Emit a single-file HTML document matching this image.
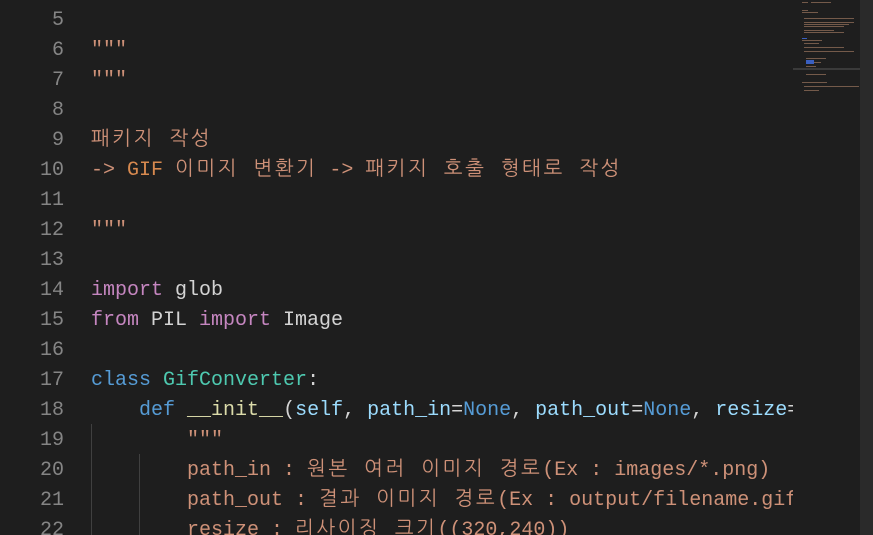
<!DOCTYPE html>
<html><head><meta charset="utf-8"><style>
html,body{margin:0;padding:0;width:873px;height:535px;overflow:hidden;background:#1e1e1e}
.ed{position:absolute;left:0;top:0;width:793px;height:535px;overflow:hidden}
.ln{position:absolute;left:0;width:64px;text-align:right;color:#858585;font:20px "Liberation Mono",monospace;line-height:30px}
.cd{position:absolute;left:91px;white-space:pre;color:#d4d4d4;font:20px "Liberation Mono","NanumGothic","Noto Sans CJK KR",monospace;line-height:30px}
.k{color:#c586c0}.b{color:#569cd6}.t{color:#4ec9b0}.y{color:#dcdcaa}.v{color:#9cdcfe}.s{color:#ce9178}
.h{letter-spacing:2.5px}
.g{position:absolute;width:1px;background:#404040}
.mm{position:absolute;left:793px;top:0;width:80px;height:535px;background:#1e1e1e}
</style></head><body>
<div class="ed">
<div class="g" style="left:91px;top:424px;height:111px"></div>
<div class="g" style="left:139px;top:454px;height:81px"></div>
<div id="c"></div>
</div>
<div class="mm">
<div style="position:absolute;left:67px;top:0;width:13px;height:535px;background:#2a2a2a"></div>
<svg width="67" height="110" style="position:absolute;left:0;top:0">
<g fill="#8a6a55" opacity=".8">
<rect x="9" y="2" width="6" height="1"/><rect x="18" y="2" width="20" height="1"/>
<rect x="9" y="10" width="6" height="1"/><rect x="9" y="12" width="16" height="1"/>
<rect x="11" y="18" width="50" height="1"/><rect x="11" y="22" width="50" height="1"/>
<rect x="11" y="24" width="45" height="1"/><rect x="11" y="26" width="40" height="1"/>
<rect x="11" y="30" width="30" height="1"/><rect x="11" y="32" width="40" height="1"/>
<rect x="9" y="40" width="20" height="1"/><rect x="11" y="43" width="15" height="1"/>
<rect x="11" y="47" width="40" height="1"/><rect x="11" y="51" width="50" height="1"/>
<rect x="13" y="58" width="20" height="1"/><rect x="13" y="62" width="15" height="1"/>
<rect x="13" y="66" width="10" height="1"/><rect x="13" y="74" width="20" height="1"/>
<rect x="9" y="82" width="25" height="1"/><rect x="11" y="86" width="55" height="1"/>
<rect x="11" y="90" width="15" height="1"/>
</g>
<g fill="#3a5fc0"><rect x="13" y="60" width="8" height="4"/><rect x="9" y="38" width="5" height="1"/></g>
<rect x="0" y="68" width="67" height="2" fill="#3a3a3a"/>
</svg>
</div>
<script>
const L=[
[5,''],[6,'<span class="s">"""</span>'],[7,'<span class="s">"""</span>'],[8,''],
[9,'<span class="s"><span class="h">패키지 작성</span></span>'],
[10,'<span class="s">-&gt; <span style="color:#d7894f">GIF</span> <span class="h">이미지 변환기</span> -&gt; <span class="h">패키지 호출 형태로 작성</span></span>'],
[11,''],[12,'<span class="s">"""</span>'],[13,''],
[14,'<span class="k">import</span> glob'],
[15,'<span class="k">from</span> PIL <span class="k">import</span> Image'],
[16,''],
[17,'<span class="b">class</span> <span class="t">GifConverter</span>:'],
[18,'    <span class="b">def</span> <span class="y">__init__</span>(<span class="v">self</span>, <span class="v">path_in</span>=<span class="b">None</span>, <span class="v">path_out</span>=<span class="b">None</span>, <span class="v">resize</span>=(320,240)):'],
[19,'        <span class="s">"""</span>'],
[20,'        <span class="s">path_in : <span class="h">원본 여러 이미지 경로</span>(Ex : images/*.png)</span>'],
[21,'        <span class="s">path_out : <span class="h">결과 이미지 경로</span>(Ex : output/filename.gif)</span>'],
[22,'        <span class="s">resize : <span class="h">리사이징 크기</span>((320,240))</span>']];
let h='';
for(const [n,c] of L){const y=6+(n-5)*30;h+=`<div class="ln" style="top:${y}px">${n}</div><div class="cd" style="top:${y}px">${c}</div>`}
document.getElementById('c').innerHTML=h;
</script>
</body></html>
